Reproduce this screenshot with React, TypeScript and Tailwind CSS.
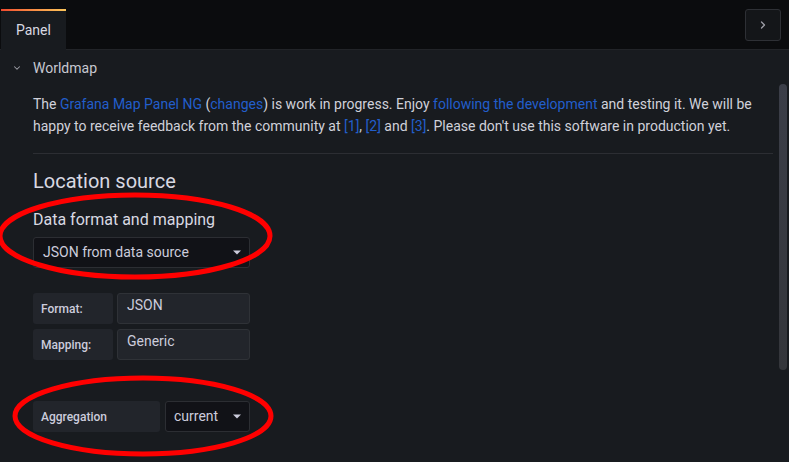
import { ChevronDown, ChevronRight } from "lucide-react";

function Caret() {
  return (
    <svg width="8" height="5" viewBox="0 0 8 5" className="shrink-0">
      <path d="M0 0.5h8L4 4.5z" fill="#ccccdc" />
    </svg>
  );
}

function Link({ children }: { children: React.ReactNode }) {
  return <span className="text-[#225ecb]">{children}</span>;
}

export default function App() {
  return (
    <div
      className="relative h-[462px] w-[789px] overflow-hidden bg-[#181b1f] text-[#ccccdc]"
      style={{ fontFamily: "Roboto, 'Noto Sans', sans-serif" }}
    >
      {/* Tab bar */}
      <div className="flex h-[50px] items-start justify-between border-b border-[#222428] bg-[#0b0c0e] pr-2 pt-[9px]">
        <div className="ml-px flex h-[41px] w-[65px] flex-col bg-[#181b1f]">
          <div className="h-[2px] bg-linear-to-r from-[#f0492f] to-[#fbc55a]" />
          <div className="flex flex-1 items-center pl-[15px] pb-px text-[14px] text-[#d8d9e2]">Panel</div>
        </div>
        <button className="flex h-[32px] w-[36px] items-center justify-center rounded-[3px] border border-[#2e3035] bg-[#141619]">
          <ChevronRight className="h-[12px] w-[12px] text-[#9fa0a8]" strokeWidth={2.5} />
        </button>
      </div>

      {/* Section header */}
      <div className="flex h-[36px] items-center pl-[12px]">
        <ChevronDown className="h-[10px] w-[10px] text-[#9fa0a8]" strokeWidth={2.5} />
        <span className="ml-[11px] text-[14px] text-[#c7c8d1]">Worldmap</span>
      </div>

      <div className="pl-[33px] pr-[16px]">
        <p className="mt-[7px] text-[14px] leading-[22px] text-[#d0d1da]">
          The <Link>Grafana Map Panel NG</Link> (<Link>changes</Link>) is work in progress. Enjoy{" "}
          <Link>following the development</Link> and testing it. We will be happy to receive feedback from the
          community at <Link>[1]</Link>, <Link>[2]</Link> and <Link>[3]</Link>. Please don't use this software in
          production yet.
        </p>

        <div className="mt-[16px] h-px bg-[#2c2e33]" />

        <div className="mt-[14px] text-[20px] leading-[26px] text-[#d8d9e2]">Location source</div>

        <div className="mt-[15px] text-[16px] leading-[22px] text-[#d8d9e2]">Data format and mapping</div>

        <div className="mt-[6px] flex h-[31px] w-[217px] items-center justify-between rounded-[3px] border border-[#2c2e33] bg-[#111217] pl-[9px] pr-[8px]">
          <span className="text-[14px]">JSON from data source</span>
          <Caret />
        </div>

        <div className="mt-[25px] flex flex-col gap-[5px]">
          <div className="flex gap-[4px]">
            <div className="flex h-[31px] w-[80px] items-center rounded-[3px] bg-[#22252b] pl-[8px] text-[12px] font-medium text-[#ccccdc]">
              Format:
            </div>
            <div className="h-[31px] w-[133px] rounded-[3px] border border-[#2f3237] bg-[#22252b] pl-[9px] pt-[2px] text-[14px] leading-[18px]">
              JSON
            </div>
          </div>
          <div className="flex gap-[4px]">
            <div className="flex h-[31px] w-[80px] items-center rounded-[3px] bg-[#22252b] pl-[8px] text-[12px] font-medium text-[#ccccdc]">
              Mapping:
            </div>
            <div className="h-[31px] w-[133px] rounded-[3px] border border-[#2f3237] bg-[#22252b] pl-[9px] pt-[2px] text-[14px] leading-[18px]">
              Generic
            </div>
          </div>
        </div>

        <div className="mt-[41px] flex gap-[5px]">
          <div className="flex h-[31px] w-[127px] items-center rounded-[3px] bg-[#22252b] pl-[8px] text-[12px] font-medium">
            Aggregation
          </div>
          <div className="flex h-[31px] w-[85px] items-center justify-between rounded-[3px] border border-[#2c2e33] bg-[#111217] pl-[8px] pr-[8px]">
            <span className="text-[14px]">current</span>
            <Caret />
          </div>
        </div>
      </div>

      {/* Scrollbar */}
      <div className="absolute left-[779px] top-[84px] h-[286px] w-[8px] rounded-full bg-linear-to-b from-[#3b3e48] to-[#34363b]" />

      {/* Red annotation ellipses */}
      <svg className="pointer-events-none absolute left-0 top-0" width="789" height="462">
        <ellipse cx="135" cy="236" rx="135" ry="41" fill="none" stroke="#ff0000" strokeWidth="5" />
        <ellipse cx="143" cy="416" rx="128" ry="38" fill="none" stroke="#ff0000" strokeWidth="5" />
      </svg>
    </div>
  );
}
